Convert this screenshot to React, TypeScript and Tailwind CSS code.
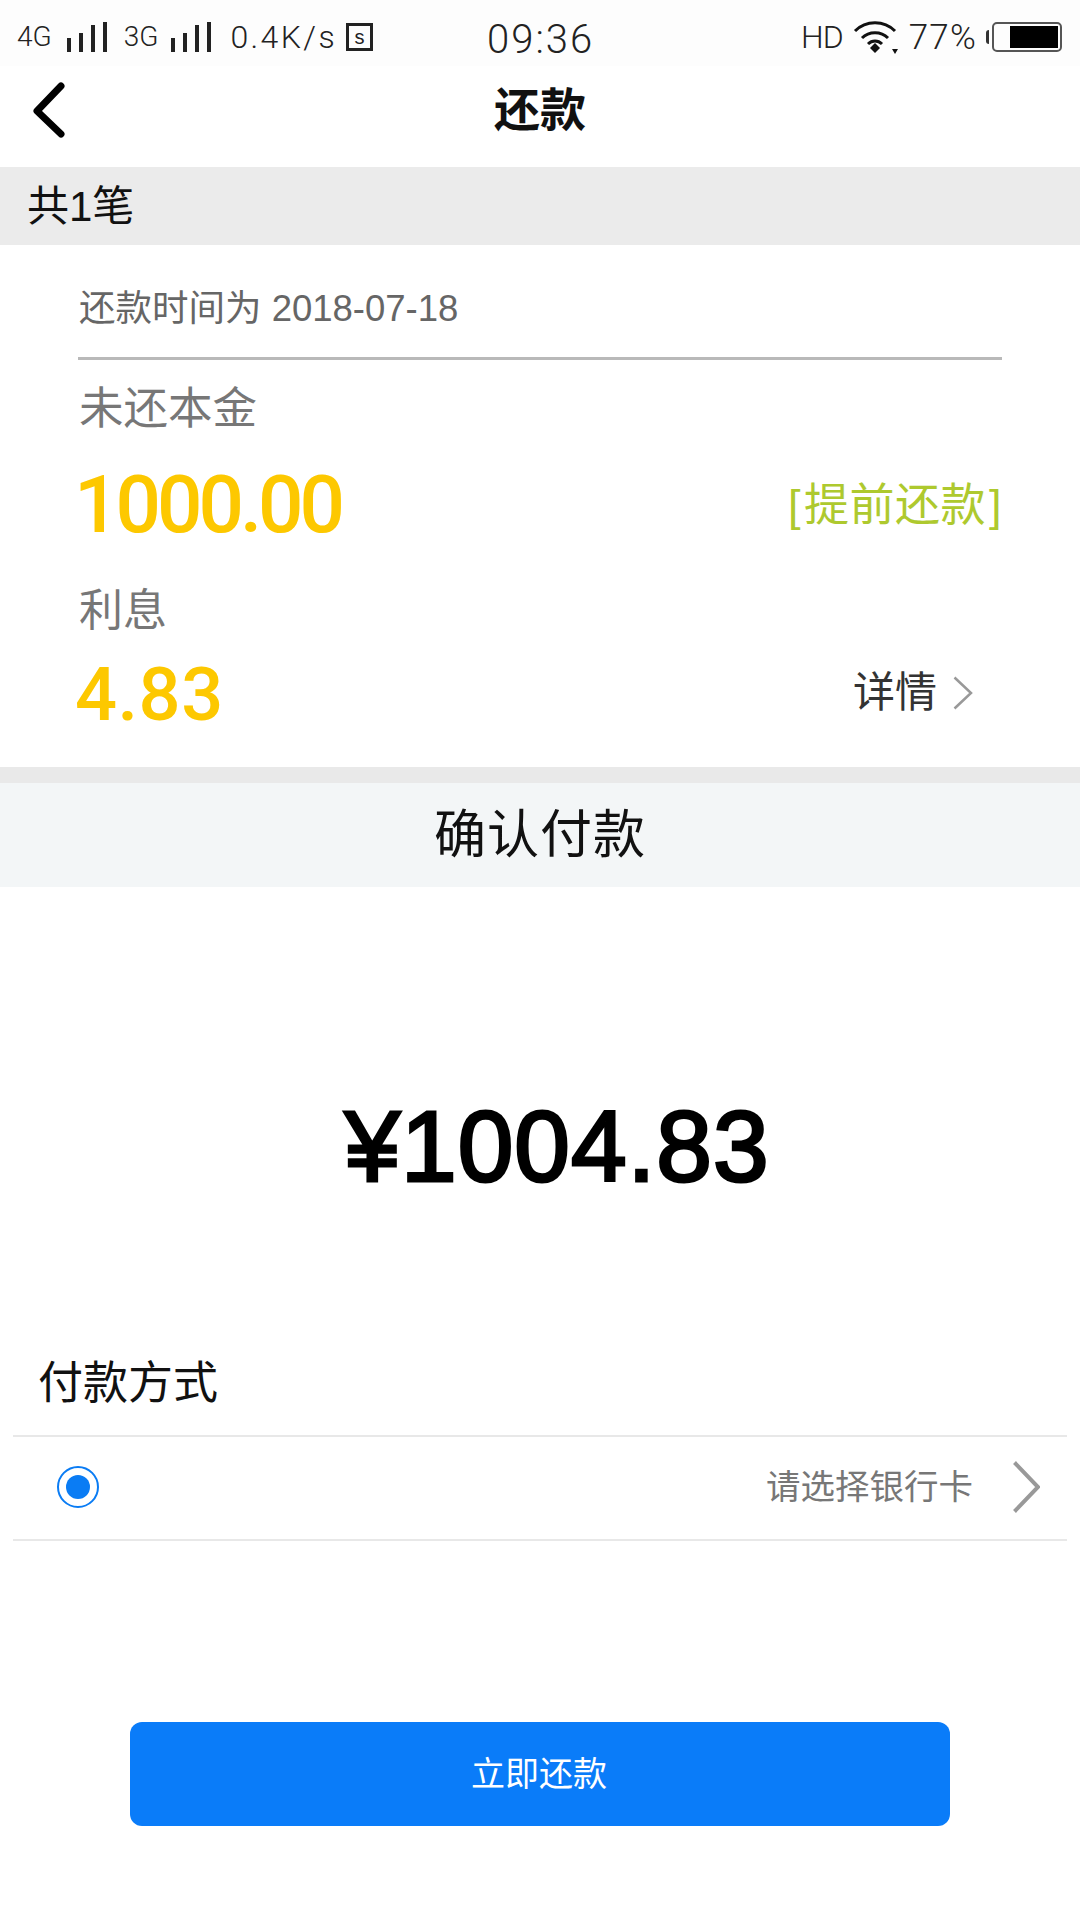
import React from "react";

const cjk = "font-['Liberation_Sans','Noto_Sans_CJK_SC',sans-serif]";

const Signal = () => (
  <svg width="42" height="30" viewBox="0 0 42 30" fill="#222">
    <rect x="1" y="16" width="4" height="14" />
    <rect x="13" y="11" width="4" height="19" />
    <rect x="25" y="3" width="4" height="27" />
    <rect x="37" y="0" width="4" height="30" />
  </svg>
);

const Chevron = ({ w, h, stroke }: { w: number; h: number; stroke: number }) => (
  <svg width={w} height={h} viewBox={`0 0 ${w} ${h}`} fill="none" stroke="#999" strokeWidth={stroke}>
    <path d={`M1.5 1.5 L${w - 2} ${h / 2} L1.5 ${h - 1.5}`} />
  </svg>
);

const StatusBar = () => (
  <div className="relative flex h-[66px] items-center justify-between bg-[#fdfdfd] pl-[17px] pr-[18px] pt-[8px] text-[#222]">
    <div className="flex items-center">
      <span className="font-['Roboto',sans-serif] text-[28px] font-light leading-none">4G</span>
      <div className="ml-[14px]"><Signal /></div>
      <span className="ml-[16px] font-['Roboto',sans-serif] text-[28px] font-light leading-none">3G</span>
      <div className="ml-[12px]"><Signal /></div>
      <span className="ml-[18px] font-['Roboto',sans-serif] text-[32px] font-light leading-none tracking-[2.4px]">0.4K/s</span>
      <div className="ml-[9px] flex h-[28px] w-[27px] items-center justify-center border-[3px] border-[#222] text-[20px] leading-none">s</div>
    </div>
    <span className="absolute left-[487px] top-[18px] font-['Roboto',sans-serif] text-[40px] font-light leading-[44px] tracking-[2px]">09:36</span>
    <div className="flex items-center">
      <span className="font-['Roboto',sans-serif] text-[32px] font-light leading-none tracking-[-1px]">HD</span>
      <svg className="ml-[10px]" width="46" height="34" viewBox="0 0 46 34" fill="none" stroke="#111" strokeWidth="3">
        <path d="M2 11 C13 0 31 0 42 11" />
        <path d="M9 18 C16 11 28 11 35 18" />
        <path d="M15 24 C19 20 25 20 29 24" />
        <path d="M17 28 L22 23 L27 28 L22 33 Z" fill="#111" stroke="none" />
        <path d="M39 29 L45 29 L42 34 Z" fill="#111" stroke="none" />
      </svg>
      <span className="ml-[10px] font-['Roboto',sans-serif] text-[35px] font-light leading-none tracking-[1.2px]">77%</span>
      <div className="ml-[9px] h-[14px] w-[3px] rounded-l-sm bg-[#333]" />
      <div className="ml-[3px] flex h-[30px] w-[70px] items-center justify-end rounded-[5px] border-2 border-[#555] pr-[2px]">
        <div className="h-[22px] w-[48px] bg-black" />
      </div>
    </div>
  </div>
);

export default function App() {
  return (
    <div className={`flex h-[1920px] w-[1080px] flex-col bg-white ${cjk}`}>
      <StatusBar />

      <div className="relative flex h-[101px] items-center justify-center">
        <svg className="absolute left-[30px] top-[14px]" width="38" height="60" viewBox="0 0 38 60" fill="none" stroke="#000" strokeWidth="7" strokeLinecap="round" strokeLinejoin="round">
          <path d="M31 6 L7 31 L31 54" />
        </svg>
        <span className="mt-[-14px] text-[46px] font-bold leading-none text-[#111]">还款</span>
      </div>

      <div className="flex h-[78px] items-center bg-[#ebebeb] pl-[27px] pt-[2px] text-[42px] leading-none text-[#111]">共1笔</div>

      <div className="flex h-[522px] flex-col">
        <div className="mx-[78px] flex h-[115px] items-center border-b-[3px] border-[#b9b9b9] pl-[1px] pt-[17px] text-[36.5px] leading-none text-[#666]">
          还款时间为 2018-07-18
        </div>
        <div className="ml-[79px] mt-[24px] text-[44.5px] leading-[50px] text-[#777]">未还本金</div>
        <div className="ml-[74px] mr-[78px] mt-[29px] flex items-center justify-between">
          <span className="font-['Roboto',sans-serif] text-[80px] font-medium leading-[84px] tracking-[-4px] text-[#fdc800]">1000.00</span>
          <span className="text-[45px] leading-none tracking-[0.5px] text-[#aec92e]">
            [<span className="mx-[3px]">提前还款</span>]
          </span>
        </div>
        <div className="ml-[79px] mt-[39px] text-[44px] leading-[50px] text-[#777]">利息</div>
        <div className="ml-[75px] mr-[107px] mt-[21px] flex items-center justify-between">
          <span className="font-['Roboto',sans-serif] text-[74px] font-medium leading-[76px] tracking-[0.5px] text-[#fdc800]">4.83</span>
          <div className="mb-[4px] flex items-center gap-[16px] text-[42px] leading-none text-[#333]">
            详情
            <Chevron w={20} h={34} stroke={2.5} />
          </div>
        </div>
      </div>

      <div className="h-[16px] bg-[#e9e9e9]" />
      <div className="flex h-[104px] items-center justify-center bg-[#f3f6f7] text-[52px] leading-none tracking-[1px] text-[#111]">确认付款</div>

      <div className="flex h-[448px] items-center justify-center pl-[34px] pt-[70px] text-[100px] leading-none tracking-[1px] text-black [-webkit-text-stroke:3px_black]">¥1004.83</div>

      <div className="mx-[13px] flex h-[102px] items-center border-b-2 border-[#e8e8e8] pb-[4px] pl-[25px] text-[45px] leading-none text-[#111]">付款方式</div>
      <div className="mx-[13px] flex h-[104px] items-center justify-between border-b-2 border-[#e8e8e8] pb-[2px] pl-[44px] pr-[27px]">
        <div className="flex h-[42px] w-[42px] items-center justify-center rounded-full border-2 border-[#0a7cf4]">
          <div className="h-[24px] w-[24px] rounded-full bg-[#0a7cf4]" />
        </div>
        <div className="flex items-center gap-[40px] text-[34.5px] leading-none text-[#777]">
          请选择银行卡
          <Chevron w={27} h={52} stroke={4} />
        </div>
      </div>

      <button type="button" className="mx-auto mt-[181px] flex h-[104px] w-[820px] items-center justify-center rounded-[12px] bg-[#0a7cf9] pr-[2px] text-[34px] leading-none text-white">
        立即还款
      </button>
    </div>
  );
}
